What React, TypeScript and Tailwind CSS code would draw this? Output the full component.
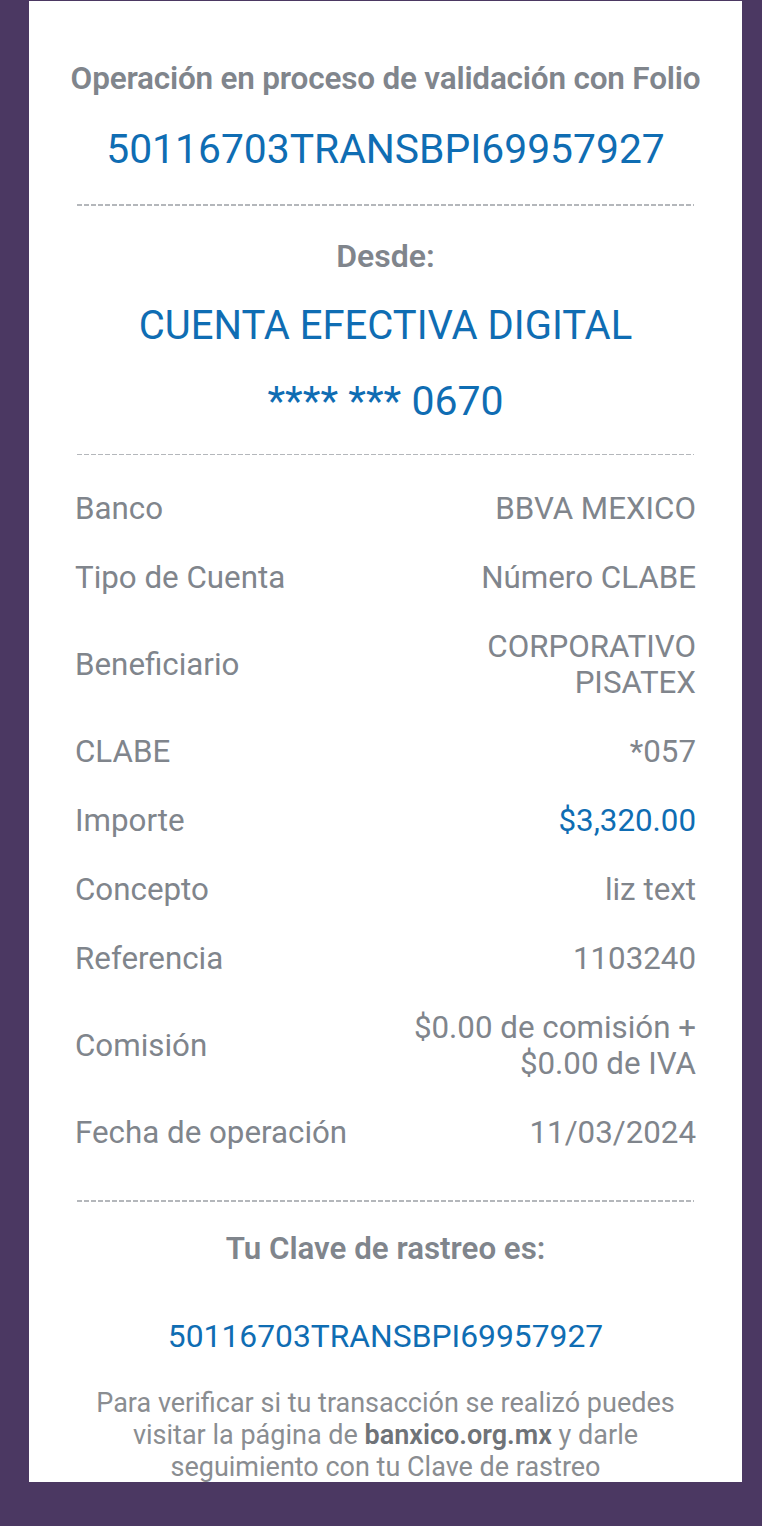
import React from "react";

const Dash = ({ className = "" }: { className?: string }) => (
  <div
    className={`mx-[2px] h-[1.5px] bg-[repeating-linear-gradient(to_right,#b4b7bb_0_5px,transparent_5px_7px)] ${className}`}
  />
);

type RowProps = { label: string; value: React.ReactNode; tall?: boolean; blue?: boolean };

const Row = ({ label, value, tall, blue }: RowProps) => (
  <div className={`flex items-center justify-between ${tall ? "h-[105px]" : "h-[69px]"}`}>
    <span className="text-[31.3px] leading-[36px] text-[#80858c]">{label}</span>
    <span
      className={`text-right text-[31.3px] leading-[36px] ${blue ? "text-[#0f6db3]" : "text-[#80858c]"}`}
    >
      {value}
    </span>
  </div>
);

export default function App() {
  return (
    <div className="min-h-[1526px] w-full bg-[#4b3862] pt-[1px] font-[Roboto,sans-serif]">
      <div className="ml-[29px] h-[1481px] w-[713px] bg-white px-[46px]">
        <div className="pt-[58px]" />
        <div className="-mx-[10px] flex h-[40px] items-center justify-center whitespace-nowrap text-[31.5px] font-semibold tracking-[-0.2px] text-[#80858c]">
          Operación en proceso de validación con Folio
        </div>
        <div className="mt-[26px] flex h-[50px] items-center justify-center text-[40.8px] text-[#0f6db3]">
          50116703TRANSBPI69957927
        </div>
        <Dash className="mt-[29px]" />
        <div className="mt-[30px] flex h-[40px] items-center justify-center text-[32px] font-semibold text-[#80858c]">
          Desde:
        </div>
        <div className="mt-[25px] flex h-[50px] items-center justify-center text-[40px] text-[#0f6db3]">
          CUENTA EFECTIVA DIGITAL
        </div>
        <div className="mt-[26px] flex h-[50px] items-center justify-center text-[41px] text-[#0f6db3]">
          **** *** 0670
        </div>
        <Dash className="mt-[27px]" />
        <div className="mt-[19px]">
          <Row label="Banco" value="BBVA MEXICO" />
          <Row label="Tipo de Cuenta" value="Número CLABE" />
          <Row
            label="Beneficiario"
            tall
            value={
              <>
                CORPORATIVO
                <br />
                PISATEX
              </>
            }
          />
          <Row label="CLABE" value="*057" />
          <Row label="Importe" value="$3,320.00" blue />
          <Row label="Concepto" value="liz text" />
          <Row label="Referencia" value="1103240" />
          <Row
            label="Comisión"
            tall
            value={
              <>
                $0.00 de comisión +
                <br />
                $0.00 de IVA
              </>
            }
          />
          <Row label="Fecha de operación" value="11/03/2024" />
        </div>
        <Dash className="mt-[33px]" />
        <div className="mt-[28px] flex h-[40px] items-center justify-center text-[31.3px] font-semibold text-[#80858c]">
          Tu Clave de rastreo es:
        </div>
        <div className="mt-[47px] flex h-[40px] items-center justify-center text-[31.8px] text-[#0f6db3]">
          50116703TRANSBPI69957927
        </div>
        <p className="-mx-[10px] mt-[30px] whitespace-nowrap text-center text-[27px] leading-[32px] text-[#8a8d91]">
          Para verificar si tu transacción se realizó puedes
          <br />
          visitar la página de <span className="font-semibold text-[#6f7378]">banxico.org.mx</span> y darle
          <br />
          seguimiento con tu Clave de rastreo
        </p>
      </div>
    </div>
  );
}
